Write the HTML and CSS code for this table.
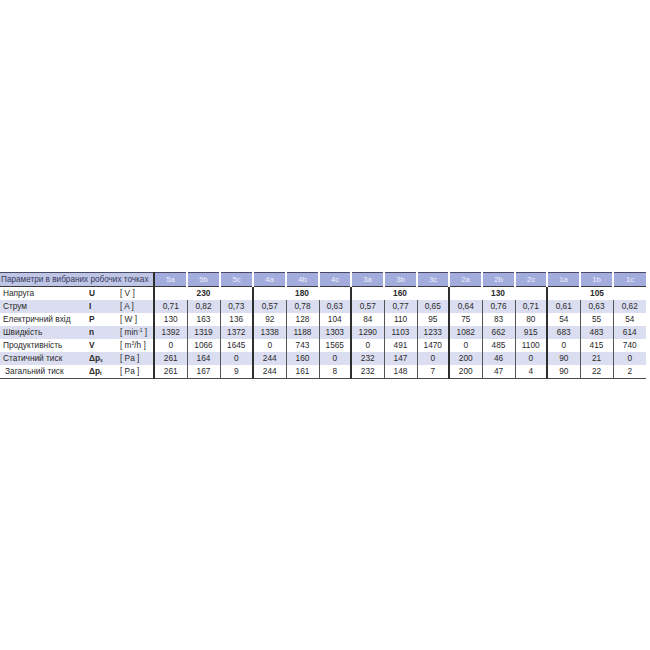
FILE: index.html
```html
<!DOCTYPE html>
<html>
<head>
<meta charset="utf-8">
<link rel="stylesheet" href="styles.css">
</head>
<body>
<div class="page">
<table class="spec">
<colgroup>
<col class="c-name"><col class="c-sym"><col class="c-unit">
<col class="w33"><col class="w33"><col class="w33">
<col class="w33"><col class="w33"><col class="w32">
<col class="w33"><col class="w33"><col class="w32">
<col class="w33"><col class="w33"><col class="w32">
<col class="w33"><col class="w33"><col class="w33">
</colgroup>
<thead>
<tr class="head">
<th class="title" colspan="3">Параметри в вибраних робочих точках</th>
<th class="g">5a</th><th>5b</th><th>5c</th>
<th class="g">4a</th><th>4b</th><th>4c</th>
<th class="g">3a</th><th>3b</th><th>3c</th>
<th class="g">2a</th><th>2b</th><th>2c</th>
<th class="g">1a</th><th>1b</th><th>1c</th>
</tr>
</thead>
<tbody>
<tr>
<td class="nm">Напруга</td><td class="sy">U</td><td class="un">[ V ]</td>
<td class="g volt" colspan="3">230</td>
<td class="g volt" colspan="3">180</td>
<td class="g volt" colspan="3">160</td>
<td class="g volt" colspan="3">130</td>
<td class="g volt" colspan="3">105</td>
</tr>
<tr class="alt">
<td class="nm">Струм</td><td class="sy">I</td><td class="un">[ A ]</td>
<td class="g">0,71</td><td>0,82</td><td>0,73</td>
<td class="g">0,57</td><td>0,78</td><td>0,63</td>
<td class="g">0,57</td><td>0,77</td><td>0,65</td>
<td class="g">0,64</td><td>0,76</td><td>0,71</td>
<td class="g">0,61</td><td>0,63</td><td>0,62</td>
</tr>
<tr>
<td class="nm">Електричний вхід</td><td class="sy">P</td><td class="un">[ W ]</td>
<td class="g">130</td><td>163</td><td>136</td>
<td class="g">92</td><td>128</td><td>104</td>
<td class="g">84</td><td>110</td><td>95</td>
<td class="g">75</td><td>83</td><td>80</td>
<td class="g">54</td><td>55</td><td>54</td>
</tr>
<tr class="alt">
<td class="nm">Швидкість</td><td class="sy">n</td><td class="un">[ min<sup>-1</sup> ]</td>
<td class="g">1392</td><td>1319</td><td>1372</td>
<td class="g">1338</td><td>1188</td><td>1303</td>
<td class="g">1290</td><td>1103</td><td>1233</td>
<td class="g">1082</td><td>662</td><td>915</td>
<td class="g">683</td><td>483</td><td>614</td>
</tr>
<tr>
<td class="nm">Продуктивність</td><td class="sy">V</td><td class="un">[ m<sup>3</sup>/h ]</td>
<td class="g">0</td><td>1066</td><td>1645</td>
<td class="g">0</td><td>743</td><td>1565</td>
<td class="g">0</td><td>491</td><td>1470</td>
<td class="g">0</td><td>485</td><td>1100</td>
<td class="g">0</td><td>415</td><td>740</td>
</tr>
<tr class="alt">
<td class="nm">Статичний тиск</td><td class="sy">&Delta;p<sub>s</sub></td><td class="un">[ Pa ]</td>
<td class="g">261</td><td>164</td><td>0</td>
<td class="g">244</td><td>160</td><td>0</td>
<td class="g">232</td><td>147</td><td>0</td>
<td class="g">200</td><td>46</td><td>0</td>
<td class="g">90</td><td>21</td><td>0</td>
</tr>
<tr class="last">
<td class="nm ind">Загальний тиск</td><td class="sy">&Delta;p<sub>t</sub></td><td class="un">[ Pa ]</td>
<td class="g">261</td><td>167</td><td>9</td>
<td class="g">244</td><td>161</td><td>8</td>
<td class="g">232</td><td>148</td><td>7</td>
<td class="g">200</td><td>47</td><td>4</td>
<td class="g">90</td><td>22</td><td>2</td>
</tr>
</tbody>
</table>
</div>
</body>
</html>
```
FILE: styles.css
```css
html, body {
  margin: 0;
  padding: 0;
  background: #ffffff;
}
.page {
  height: 650px;
  display: flex;
  align-items: center;
  justify-content: flex-start;
}
.spec {
  border-collapse: collapse;
  table-layout: fixed;
  width: 646px;
  font-family: "Liberation Sans", Arial, sans-serif;
  font-size: 8.3px;
  color: #2a2a2a;
}
.c-name { width: 86px; }
.c-sym { width: 33px; }
.c-unit { width: 35px; }
.w33 { width: 33px; }
.w32 { width: 32px; }
.spec th, .spec td {
  padding: 0;
  height: 13px;
  line-height: 13px;
  text-align: center;
  white-space: nowrap;
  overflow: visible;
  border-left: 1px solid #555555;
}
.spec td.nm, .spec td.sy, .spec td.un {
  border-left: none;
}
.spec td.nm {
  text-align: left;
  padding-left: 3px;
}
.spec td.ind { padding-left: 5px; }
.spec td.sy {
  text-align: left;
  font-weight: bold;
  padding-left: 3px;
}
.spec td.un {
  text-align: left;
  padding-left: 1px;
}
.spec .g {
  border-left: 2px solid #2e2e2e;
}
.head th {
  height: 12.5px;
  border-top: 1px solid #4a4a64;
  border-bottom: 1px solid #3a3a3a;
  background: #a3addd;
  color: #eef0fb;
  font-weight: normal;
  font-size: 7.8px;
  border-left: 2px solid #ffffff;
}
.head th.title {
  background: #bfc5e5;
  color: #363a5c;
  text-align: left;
  padding-left: 1px;
  font-size: 8.2px;
  letter-spacing: 0;
  border-left: none;
  border-right: 2px solid #2e2e2e;
}
.head th.g { border-left: 2px solid #ffffff; }
.head th.title + th.g { border-left: 2px solid #2e2e2e; }
.alt td { background: #dadef0; }
.volt { font-weight: bold; }
.last td { border-bottom: 1px solid #4a4a4a; }
sup, sub {
  font-size: 5px;
  line-height: 0;
}
sup { vertical-align: 3px; }
sub { vertical-align: -1px; font-weight: bold; }
```
